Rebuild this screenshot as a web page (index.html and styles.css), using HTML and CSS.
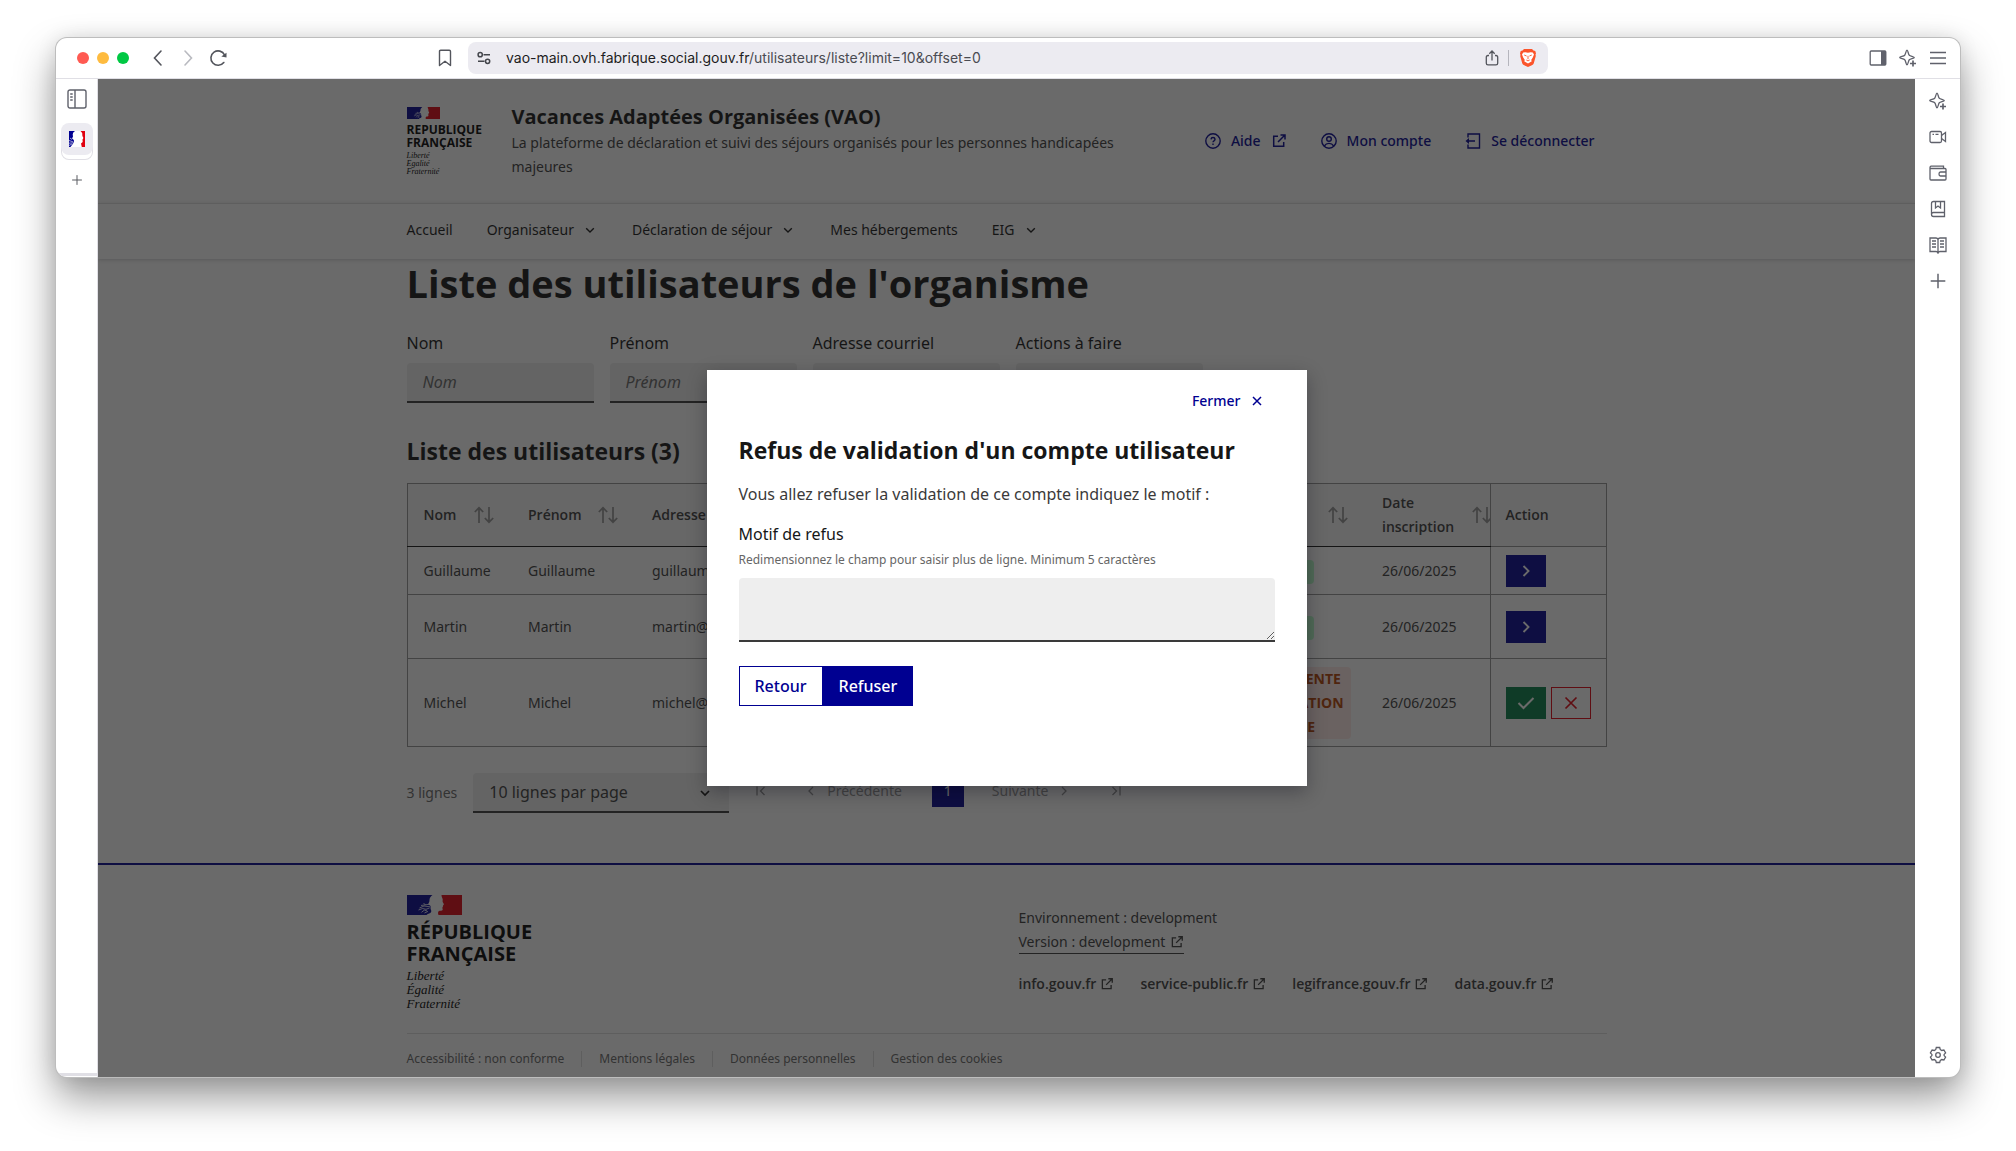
FILE: index.html
```html
<!DOCTYPE html>
<html lang="fr">
<head>
<meta charset="utf-8">
<title>Vacances Adaptées Organisées (VAO)</title>
<link rel="stylesheet" href="styles.css">
</head>
<body>
<svg class="sprite" aria-hidden="true">
  <symbol id="chevron-down" viewBox="0 0 16 16"><path d="M4.2 6.2 8 10l3.800-3.800" fill="none" stroke="currentColor" stroke-width="1.400"/></symbol>
  <symbol id="external" viewBox="0 0 16 16"><path d="M7 3.300H2.700v10h10V9M9.500 2h4.500v4.500M13.700 2.300 7 9" fill="none" stroke="currentColor" stroke-width="1.500"/></symbol>
  <symbol id="sort" viewBox="0 0 20 18"><path d="M5 17V2M.8 6 5 1.800 9.200 6M15 1v15M10.800 12l4.200 4.200 4.200-4.200" fill="none" stroke="currentColor" stroke-width="1.700"/></symbol>
  <symbol id="angle" viewBox="0 0 16 16"><path d="m5.500 3 5 5-5 5" fill="none" stroke="currentColor" stroke-width="1.900"/></symbol>
  <symbol id="plus" viewBox="0 0 16 16"><path d="M8 1.500v13M1.500 8h13" fill="none" stroke="currentColor" stroke-width="1.300"/></symbol>
  <symbol id="cross" viewBox="0 0 16 16"><path d="m2.500 2.500 11 11M13.500 2.500l-11 11" fill="none" stroke="currentColor" stroke-width="1.700"/></symbol>
  <symbol id="sparkle" viewBox="0 0 18 18"><path d="M8 1.200c1 0 1.200 4 2.300 5s5 1.300 5 2.300-4 1.200-5 2.300-1.300 5-2.300 5-1.200-4-2.300-5-5-1.300-5-2.300 4-1.200 5-2.300 1.300-5 2.300-5z" fill="none" stroke="currentColor" stroke-width="1.300"/><path d="M14 11.500v6M11 14.500h6" stroke="currentColor" stroke-width="1.700"/></symbol>
  <symbol id="flag" viewBox="0 0 55 20">
    <path d="M0 0h25.500c-1 .6-1.500 1.400-2.300 2.400-.9 1.300-.6 2.600-.8 3.900-.2 1.400-1.400 2.200-.9 3.200.6.900 1.600.7 2 1.600.3 1.200-.2 2 .2 3.200.4 1.100 1 1.700.3 2.900-.8 1.300-2.600 1-4.500 2.800H0z" fill="#000091"/>
    <path d="M34.500 0H55v20H31.500c-.7-1.500-.6-3.200.4-3.900 1.200-.7 3.200.1 3.700-1 .4-1-.3-1.500-.2-2.400.1-.8.700-1 .6-1.700-.1-.8.8-1 .9-1.700 0-.8-1.200-1.700-1.300-2.900-.1-1 .3-1.500 0-2.500-.3-1.100-1.100-1.900-1.100-3.900z" fill="#e1000f"/>
    <path d="M14 10.500l8-1.200M12.500 13l4.500-2 6 .8M11.500 15l4-1.500 3.500.8 3.500-1.300M14.500 17.300l2.800-2.200 2.700.8M17.500 18l3.500-1.600M16.500 8.500l2 1" fill="none" stroke="#fff" stroke-width=".8"/>
  </symbol>
</svg>

<div class="window">
  <div class="toolbar">
    <div class="toolbar-start">
      <div class="lights"><span class="light red"></span><span class="light amber"></span><span class="light green"></span></div>
      <div class="history">
        <button class="icon-btn" aria-label="Page précédente"><svg width="18" height="18" viewBox="0 0 18 18"><path d="m12 2-6.500 7 6.500 7" fill="none" stroke="#53555c" stroke-width="1.600" stroke-linecap="round"/></svg></button>
        <button class="icon-btn" aria-label="Page suivante"><svg width="18" height="18" viewBox="0 0 18 18"><path d="m6 2 6.500 7L6 16" fill="none" stroke="#b9bac0" stroke-width="1.600" stroke-linecap="round"/></svg></button>
        <button class="icon-btn" aria-label="Recharger"><svg width="18" height="18" viewBox="0 0 18 18"><path d="M14.800 13.500A7.200 7.200 0 1 1 15.600 6" fill="none" stroke="#53555c" stroke-width="1.600" stroke-linecap="round"/><path d="M12.300 7.500 17.500 8.500V3.800z" fill="#53555c"/></svg></button>
      </div>
      <button class="icon-btn" aria-label="Favori"><svg width="18" height="18" viewBox="0 0 18 18"><path d="M3.500 2.500q0-1.200 1.200-1.200h8.600q1.200 0 1.200 1.200v14L9 12.300 3.500 16.500z" fill="none" stroke="#53555c" stroke-width="1.400" stroke-linejoin="round"/></svg></button>
    </div>
    <div class="address">
      <svg width="14" height="14" viewBox="0 0 14 14" fill="none" stroke="#44464c" stroke-width="1.500"><circle cx="3.200" cy="3.700" r="2.100"/><path d="M6.500 3.700h6.500M1 10.300h6.500"/><circle cx="10.600" cy="10.300" r="2.100"/></svg>
      <span class="url"><span class="host">vao-main.ovh.fabrique.social.gouv.fr</span>/utilisateurs/liste?limit=10&amp;offset=0</span>
      <svg width="16" height="16" viewBox="0 0 16 16" fill="none" stroke="#53555c" stroke-width="1.300"><path d="M5 5.500H4q-1.700 0-1.700 1.700v6q0 1.700 1.700 1.700h8q1.700 0 1.700-1.700v-6q0-1.700-1.700-1.700h-1M8 10.500V1.200M5.300 3.700 8 1l2.700 2.700"/></svg>
      <span class="address-rule"></span>
      <svg width="16" height="18" viewBox="0 0 16 18"><path d="M4 0h8l1.500 1.600 1.800.4.700 2.500-.5 1 .3 1.500-2 7.200q-.4 1.200-1.400 1.800L8 18l-4.400-2q-1-.6-1.400-1.800l-2-7.200.3-1L0 4.500.7 2l1.800-.4z" fill="#fb542b"/><path d="M3.200 3.600 5.300 3.200 8 3.800l2.700-.6 2.100.4 1.200 2-1.200 3-1.600 2.300.6 1.300L8 14.600l-3.800-2.400.6-1.300L3.200 8.600 2 5.600z" fill="#fff"/><path d="M4.200 6 6.600 7M11.800 6 9.400 7M8 6.800v3.400M6.300 11 8 11.900 9.700 11" stroke="#fb542b" stroke-width=".9" fill="none"/></svg>
    </div>
    <div class="toolbar-end">
      <svg width="18" height="18" viewBox="0 0 18 18"><rect x="1.200" y="2" width="15.600" height="14" rx="1" fill="none" stroke="#5f616b" stroke-width="1.300"/><path d="M12 2h5v14h-5z" fill="#5f616b"/></svg>
      <svg width="18" height="18"><use href="#sparkle"/></svg>
      <svg width="18" height="18" viewBox="0 0 18 18"><path d="M1 3.500h16M1 9h16M1 14.500h16" stroke="#5f616b" stroke-width="1.300"/></svg>
    </div>
  </div>

  <div class="workspace">
    <aside class="rail rail-left">
      <svg width="20" height="20" viewBox="0 0 20 20" fill="none" stroke="#5f616b" stroke-width="1.400"><rect x="1" y="1" width="18" height="18" rx="2"/><path d="M8 1v18"/><path d="M3.200 5h2.500M3.200 8h2.500M3.200 11h2.500"/></svg>
      <div class="tab-active"><svg width="16" height="16" viewBox="0 0 16 16"><path d="M0 0h16v16H0z" fill="#fff"/><path d="M0 0h6L4.300 1.500l-.6 2 .3 2-.9 2 1.700 1.600.3 2L3 14l-1.500 2H0z" fill="#000091"/><path d="M16 0h-4.500l1.700 2 .2 3 1 2-.9 1.500.2 2.500-1.700 1.500.8 3.500H16z" fill="#e1000f"/><path d="m0 9.500 4.500 1.500M0 12.200l4.500-.4M0 14.500l3-1.500M1 7l2 1.500" stroke="#fff" stroke-width=".6"/></svg></div>
      <svg class="faint" width="12" height="12"><use href="#plus"/></svg>
      <span class="rail-foot"></span>
    </aside>

    <div class="viewport">
      <div class="page">
        <header class="site-header">
          <div class="container brand-row">
            <div class="logo logo-small">
              <svg class="flag" viewBox="0 0 55 20"><use href="#flag"/></svg>
              <p class="logo-name">REPUBLIQUE<br>FRANÇAISE</p>
              <p class="logo-motto">Liberté<br>Egalité<br>Fraternité</p>
            </div>
            <div class="service">
              <p class="service-title">Vacances Adaptées Organisées (VAO)</p>
              <p class="service-tagline">La plateforme de déclaration et suivi des séjours organisés pour les personnes handicapées majeures</p>
            </div>
            <ul class="quick-links">
              <li><a href="#aide"><svg width="16" height="16" viewBox="0 0 16 16" fill="none" stroke="currentColor" stroke-width="1.400"><circle cx="8" cy="8" r="7.200"/><path d="M6 6.300q.2-1.800 2-1.800t2 1.700q0 1-1 1.600T8 9.300M8 10.500V12"/></svg>Aide<svg width="16" height="16"><use href="#external"/></svg></a></li>
              <li><a href="#compte"><svg width="16" height="16" viewBox="0 0 16 16" fill="none" stroke="currentColor" stroke-width="1.400"><circle cx="8" cy="8" r="7.200"/><circle cx="8" cy="6" r="2.300"/><path d="M3.300 13q1.700-2.600 4.700-2.600t4.700 2.600"/></svg>Mon compte</a></li>
              <li><a href="#sortie"><svg width="16" height="16" viewBox="0 0 16 16" fill="none" stroke="currentColor" stroke-width="1.400"><path d="M3 4.500V1h11.500v14H3v-3.500M10 8H2"/><path d="M4 5 .5 8 4 11z" fill="currentColor" stroke="none"/></svg>Se déconnecter</a></li>
            </ul>
          </div>
          <nav class="main-nav">
            <ul class="container nav-list">
              <li><a href="#accueil">Accueil</a></li>
              <li><button>Organisateur<svg width="16" height="16"><use href="#chevron-down"/></svg></button></li>
              <li><button>Déclaration de séjour<svg width="16" height="16"><use href="#chevron-down"/></svg></button></li>
              <li><a href="#hebergements">Mes hébergements</a></li>
              <li><button>EIG<svg width="16" height="16"><use href="#chevron-down"/></svg></button></li>
            </ul>
          </nav>
        </header>

        <main class="container">
          <h1>Liste des utilisateurs de l'organisme</h1>
          <form class="filters">
            <div class="field"><label for="nom">Nom</label><input id="nom" type="text" placeholder="Nom"></div>
            <div class="field"><label for="prenom">Prénom</label><input id="prenom" type="text" placeholder="Prénom"></div>
            <div class="field"><label for="courriel">Adresse courriel</label><input id="courriel" type="text"></div>
            <div class="field"><label for="actions">Actions à faire</label><input id="actions" type="text"></div>
          </form>
          <h2>Liste des utilisateurs (3)</h2>
          <table class="users">
            <colgroup><col class="c-nom"><col class="c-prenom"><col class="c-mail"><col class="c-statut"><col class="c-date"><col class="c-action"></colgroup>
            <thead>
              <tr>
                <th scope="col"><div class="th">Nom<svg width="20" height="18"><use href="#sort"/></svg></div></th>
                <th scope="col"><div class="th">Prénom<svg width="20" height="18"><use href="#sort"/></svg></div></th>
                <th scope="col">Adresse courriel</th>
                <th scope="col"><div class="th">Statut<svg width="20" height="18"><use href="#sort"/></svg></div></th>
                <th scope="col"><div class="th th-date">Date inscription<svg width="20" height="18"><use href="#sort"/></svg></div></th>
                <th scope="col" class="action">Action</th>
              </tr>
            </thead>
            <tbody>
              <tr>
                <td>Guillaume</td><td>Guillaume</td><td>guillaume@vao.fr</td><td><span class="badge ok">VALIDÉ</span></td><td>26/06/2025</td>
                <td class="action"><div class="actions"><button class="act go" aria-label="Voir"><svg width="16" height="16"><use href="#angle"/></svg></button></div></td>
              </tr>
              <tr class="tall">
                <td>Martin</td><td>Martin</td><td>martin@vao.fr</td><td><span class="badge ok">VALIDÉ</span></td><td>26/06/2025</td>
                <td class="action"><div class="actions"><button class="act go" aria-label="Voir"><svg width="16" height="16"><use href="#angle"/></svg></button></div></td>
              </tr>
              <tr>
                <td>Michel</td><td>Michel</td><td>michel@vao.fr</td><td><span class="badge wait">EN ATTENTE<br>VALIDATION<br>COMPTE</span></td><td>26/06/2025</td>
                <td class="action"><div class="actions"><button class="act accept" aria-label="Valider"><svg width="18" height="16" viewBox="0 0 18 16"><path d="m1.500 8 5 5L16.500 3" fill="none" stroke="currentColor" stroke-width="2"/></svg></button><button class="act refuse" aria-label="Refuser"><svg width="16" height="16"><use href="#cross"/></svg></button></div></td>
              </tr>
            </tbody>
          </table>
          <div class="table-foot">
            <label for="lignes">3 lignes</label>
            <div class="select"><select id="lignes"><option>10 lignes par page</option></select><svg width="16" height="16" viewBox="0 0 16 16"><path d="M4 6l4 4 4-4" fill="none" stroke="currentColor" stroke-width="1.700"/></svg></div>
            <nav class="pagination" aria-label="Pagination">
              <svg width="16" height="16" viewBox="0 0 16 16" fill="none" stroke="currentColor" stroke-width="1.300"><path d="M4 3.500v9M11.500 4l-4 4 4 4"/></svg>
              <span class="prev"><svg width="16" height="16" viewBox="0 0 16 16" fill="none" stroke="currentColor" stroke-width="1.300"><path d="M10 4 6 8l4 4"/></svg>Précédente</span>
              <a class="current" href="#page-1">1</a>
              <span class="next">Suivante<svg width="16" height="16" viewBox="0 0 16 16" fill="none" stroke="currentColor" stroke-width="1.300"><path d="m6 4 4 4-4 4"/></svg></span>
              <svg width="16" height="16" viewBox="0 0 16 16" fill="none" stroke="currentColor" stroke-width="1.300"><path d="M12 3.500v9M4.500 4l4 4-4 4"/></svg>
            </nav>
          </div>
        </main>

        <footer class="site-footer">
          <div class="container">
            <div class="footer-body">
              <div class="logo logo-large">
                <svg class="flag" viewBox="0 0 55 20"><use href="#flag"/></svg>
                <p class="logo-name">RÉPUBLIQUE<br>FRANÇAISE</p>
                <p class="logo-motto">Liberté<br>Égalité<br>Fraternité</p>
              </div>
              <div class="footer-content">
                <p>Environnement : development</p>
                <p><a class="version" href="#version">Version : development<svg width="14" height="14"><use href="#external"/></svg></a></p>
                <ul class="gov-links">
                  <li><a href="#info">info.gouv.fr<svg width="14" height="14"><use href="#external"/></svg></a></li>
                  <li><a href="#service">service-public.fr<svg width="14" height="14"><use href="#external"/></svg></a></li>
                  <li><a href="#legifrance">legifrance.gouv.fr<svg width="14" height="14"><use href="#external"/></svg></a></li>
                  <li><a href="#data">data.gouv.fr<svg width="14" height="14"><use href="#external"/></svg></a></li>
                </ul>
              </div>
            </div>
            <ul class="legal">
              <li><a href="#a11y">Accessibilité : non conforme</a></li>
              <li><a href="#mentions">Mentions légales</a></li>
              <li><a href="#donnees">Données personnelles</a></li>
              <li><a href="#cookies">Gestion des cookies</a></li>
            </ul>
          </div>
        </footer>
      </div>

      <div class="scrim">
        <div class="modal" role="dialog" aria-labelledby="modal-title">
          <div class="modal-head"><button class="close">Fermer<svg width="16" height="16" viewBox="0 0 16 16"><path d="m4 4 8 8M12 4l-8 8" fill="none" stroke="currentColor" stroke-width="1.500"/></svg></button></div>
          <h2 id="modal-title">Refus de validation d'un compte utilisateur</h2>
          <p class="modal-text">Vous allez refuser la validation de ce compte indiquez le motif :</p>
          <label for="motif">Motif de refus</label>
          <p class="hint" id="motif-hint">Redimensionnez le champ pour saisir plus de ligne. Minimum 5 caractères</p>
          <textarea id="motif" aria-describedby="motif-hint"></textarea>
          <div class="modal-actions"><button class="btn secondary">Retour</button><button class="btn primary">Refuser</button></div>
        </div>
      </div>
    </div>

    <aside class="rail rail-right">
      <svg width="18" height="18"><use href="#sparkle"/></svg>
      <svg width="18" height="18" viewBox="0 0 18 18" fill="none" stroke="currentColor" stroke-width="1.300"><rect x="1" y="3.500" width="11.500" height="11" rx="1.500"/><path d="m12.500 7.500 4-3v9l-4-3M3.500 6.300H5M6.500 6.300h3"/></svg>
      <svg width="18" height="18" viewBox="0 0 18 18" fill="none" stroke="currentColor" stroke-width="1.300"><path d="M1 3.500V15q0 1 1 1h14q1 0 1-1V5.500q0-1-1-1H2q-1 0-1-1t1-1.300h12.500v2.300M17 8h-5.500q-1.500 0-1.500 2t1.500 2H17"/></svg>
      <svg width="18" height="18" viewBox="0 0 18 18" fill="none" stroke="currentColor" stroke-width="1.300"><path d="M15.500 12.500v-11h-11q-2 0-2 2v11q0 2 2 2h11v-4h-11q-2 0-2 2M6.500 1.500V8L9 6l2.500 2V1.500"/></svg>
      <svg width="18" height="18" viewBox="0 0 18 18" fill="none" stroke="currentColor" stroke-width="1.300"><path d="M9 3.500Q8.500 2 7 2H1v13.500h6q1.500 0 2 1.500.5-1.500 2-1.500h6V2h-6q-1.500 0-2 1.500V17M3 5h4M3 8h4M3 11h4M11 5h4M11 8h4M11 11h4"/></svg>
      <svg width="18" height="18"><use href="#plus"/></svg>
      <svg class="gear" width="18" height="18" viewBox="0 0 18 18" fill="none" stroke="currentColor" stroke-width="1.300"><path d="M7.300 1.500h3.400l.6 2.100 1.500.9 2.100-.5 1.700 2.900-1.500 1.500v1.200l1.500 1.500-1.700 2.900-2.100-.5-1.500.9-.6 2.100H7.300l-.6-2.100-1.500-.9-2.100.5-1.700-2.900 1.500-1.500V8.400L1.400 6.900 3.100 4l2.100.5 1.500-.9z"/><circle cx="9" cy="9" r="2.300"/></svg>
    </aside>
  </div>
</div>
</body>
</html>
```

FILE: styles.css
```css
:root {
  --text: "Noto Sans", "Open Sans", sans-serif;
  --strong: "Open Sans", "Noto Sans", sans-serif;
  --ui: Inter, "Liberation Sans", sans-serif;
  --blue: #000091;
  --grey: #3a3a3a;
  --ink: #161616;
}
* { box-sizing: border-box; }
body {
  margin: 0;
  padding: 38px 56px 74px;
  height: 100vh;
  background: #fff;
  color: var(--grey);
  font: 14px/24px var(--text);
  overflow: hidden;
}
p, h1, h2, ul { margin: 0; padding: 0; }
h1, h2 { font-family: var(--strong); font-weight: 700; }
ul { list-style: none; }
a { color: inherit; text-decoration: none; }
button { font: inherit; color: inherit; background: none; border: 0; padding: 0; }
svg { flex: none; display: block; }
.sprite { position: absolute; width: 0; height: 0; }

/* Browser window */
.window {
  display: flex;
  flex-direction: column;
  height: 100%;
  border-radius: 11px;
  overflow: hidden;
  background: #fff;
  box-shadow: 0 0 0 1px #bdbdbd, 0 20px 40px rgba(0, 0, 0, .42), 0 0 20px rgba(0, 0, 0, .1);
}
.toolbar {
  display: flex;
  align-items: center;
  height: 41px;
  flex: none;
  border-bottom: 1px solid #e0dfe5;
  color: #5f616b;
}
.toolbar-start { display: flex; align-items: center; width: 412px; padding: 0 14px 0 21px; }
.lights { display: flex; gap: 8px; }
.light { width: 12px; height: 12px; border-radius: 50%; }
.red { background: #ff5a52; }
.amber { background: #febb3f; }
.green { background: #00c843; }
.history { display: flex; gap: 12px; margin: 0 auto 0 20px; }
.address {
  display: flex;
  align-items: center;
  flex: 0 1 1080px;
  height: 32px;
  padding: 0 12px 0 9px;
  border-radius: 8px;
  background: #ecebf1;
}
.url { flex: 1; margin-left: 15px; font: 14px/20px var(--ui); color: #4a4b52; }
.host { color: #1d1d22; }
.address-rule { width: 1px; height: 16px; margin: 0 11px 0 8px; background: #b5b5bd; }
.toolbar-end { display: flex; gap: 12px; margin-left: auto; padding-right: 13px; }
.workspace { display: flex; flex: 1; min-height: 0; }
.rail { display: flex; flex-direction: column; align-items: center; flex: none; color: #5f616b; }
.rail-left { width: 42px; padding-top: 10px; border-right: 1px solid #e0dfe5; }
.tab-active {
  display: grid;
  place-items: center;
  width: 32px;
  height: 32px;
  margin: 14px 0 19px;
  border-radius: 8px;
  background: #ecebf1;
  box-shadow: 0 5px 0 -1px #fff, 0 5px 0 0 #e0dfe5;
}
.faint { color: #55575e; }
.rail-foot { width: 100%; height: 3px; margin: auto 0 1px; background: #e0dfe5; }
.rail-right { width: 45px; gap: 18px; padding: 13px 0 13px; }
.gear { margin-top: auto; }

/* Page */
.viewport { position: relative; flex: 1; min-width: 0; overflow: hidden; background: #fff; }
.container { width: calc(100% - 48px); max-width: 1200px; margin: 0 auto; }
.brand-row { display: flex; align-items: center; height: 124px; }
.logo { color: #000; }
.logo-name { font-family: var(--strong); font-weight: 700; }
.logo-motto { font-family: "Liberation Serif", serif; font-style: italic; }
.flag { width: 55px; height: 20px; }
.logo-small { width: 105px; }
.logo-small .flag { width: 33px; height: 12px; }
.logo-small .logo-name { margin-top: 4px; font-size: 12px; line-height: 13px; }
.logo-small .logo-motto { margin-top: 3px; font-size: 8px; line-height: 8px; }
.service { flex: 1; max-width: 632px; }
.service-title { font: 700 20px/28px var(--strong); color: var(--ink); }
.quick-links { display: flex; margin-left: auto; color: var(--blue); font-weight: 500; }
.quick-links a { display: flex; align-items: center; gap: 10px; padding: 4px 12px; }
.quick-links li + li { margin-left: 10px; }
.main-nav { border-top: 1px solid #ddd; box-shadow: 0 1px 4px rgba(0, 0, 18, .2); color: var(--ink); }
.nav-list { display: flex; gap: 34px; }
.nav-list a, .nav-list button { display: flex; align-items: center; gap: 8px; padding: 14px 0 17px; }

h1 { font-size: 38px; line-height: 48px; color: var(--ink); }
.filters { display: flex; gap: 16px; margin-top: 24px; }
.field { flex: 0 1 187px; min-width: 0; }
.field label { display: block; font-size: 16px; color: var(--ink); }
.field input {
  display: block;
  width: 100%;
  height: 40px;
  margin-top: 8px;
  padding: 0 16px;
  border: 0;
  border-bottom: 2px solid var(--grey);
  border-radius: 4px 4px 0 0;
  background: #eee;
  font: 16px/24px var(--text);
}
.field input::placeholder { color: #666; font-style: italic; }
main h2 { margin: 32px 0 16px; font-size: 23px; line-height: 32px; color: var(--ink); }

.users { width: 100%; table-layout: fixed; border-collapse: collapse; border: 1px solid #929292; }
.c-nom { width: 105px; }
.c-prenom { width: 124px; }
.c-statut { width: 132px; }
.c-date { width: 124px; }
.c-action { width: 116px; }
.users th { height: 63px; padding: 0 0 0 16px; text-align: left; font-family: var(--strong); font-weight: 600; background: #f6f6f6; border-bottom: 1px solid var(--ink); }
.users td { height: 48px; padding: 8px 0 7px 16px; border-bottom: 1px solid #929292; }
.users .tall td { height: 64px; }
.users .action { padding-left: 15px; border-left: 1px solid #929292; }
.users th.action { border-bottom-color: #929292; }
.th { display: flex; align-items: center; justify-content: space-between; padding-right: 18px; overflow: hidden; }
.th svg { color: #929292; }
.th-date { padding-right: 0; }
.th-date svg { margin-right: -2px; }
.badge { display: inline-block; vertical-align: middle; padding: 0 7px; border-radius: 4px; font-family: var(--strong); font-weight: 700; }
.ok { color: #18753c; background: #b8fec9; }
.wait { color: #b34000; background: #ffe9e6; }
.actions { display: flex; gap: 5px; }
.act { display: grid; place-items: center; width: 40px; height: 32px; color: #fff; }
.go { background: var(--blue); }
.accept { background: #057d45; }
.refuse { border: 1px solid #e1000f; color: #e1000f; }

.table-foot { display: flex; align-items: center; gap: 16px; margin: 26px 0 50px; color: #666; }
.select { position: relative; width: 256px; color: var(--ink); }
.select select {
  display: block;
  width: 100%;
  height: 40px;
  padding: 0 16px;
  appearance: none;
  border: 0;
  border-bottom: 2px solid var(--grey);
  border-radius: 4px 4px 0 0;
  background: #eee;
  color: var(--grey);
  font: 16px/24px var(--text);
}
.select svg { position: absolute; right: 16px; top: 12px; }
.pagination { display: flex; align-items: center; padding: 0 0 4px 8px; color: #929292; }
.prev, .next { display: flex; align-items: center; gap: 8px; }
.prev { margin: 0 30px 0 34px; }
.next { margin: 0 36px 0 28px; }
.current { width: 32px; height: 32px; line-height: 32px; text-align: center; background: var(--blue); color: #fff; }

.site-footer { border-top: 2px solid var(--blue); }
.footer-body { display: flex; justify-content: space-between; padding: 30px 0 22px; }
.logo-large .logo-name { margin-top: 6px; font-size: 20px; line-height: 22px; }
.logo-large .logo-motto { margin-top: 4px; font-size: 13px; line-height: 14px; }
.footer-content { width: 588px; padding-top: 11px; }
.version { display: inline-flex; align-items: center; gap: 5px; line-height: 22px; border-bottom: 1px solid var(--grey); }
.gov-links { display: flex; gap: 26px; margin-top: 18px; font-family: var(--strong); font-weight: 600; }
.gov-links a { display: flex; align-items: center; gap: 4px; }
.legal { display: flex; padding-top: 17px; border-top: 1px solid #ddd; font-size: 12px; line-height: 16px; color: #666; }
.legal li + li { margin-left: 17px; padding-left: 17px; border-left: 1px solid #ddd; }

/* Dialog */
.scrim {
  position: absolute;
  inset: 0;
  display: grid;
  place-items: center;
  background: rgba(22, 22, 22, .64);
}
.modal {
  width: 600px;
  max-width: 100%;
  padding: 15px 32px 80px;
  background: #fff;
  box-shadow: 0 6px 18px rgba(0, 0, 18, .3);
}
.modal-head { display: flex; justify-content: flex-end; margin-bottom: 17px; }
.close { display: flex; align-items: center; gap: 8px; padding: 4px 10px 4px 12px; color: var(--blue); font-weight: 500; }
.modal h2 { font-size: 23px; line-height: 32px; color: var(--ink); margin-bottom: 16px; }
.modal-text { font-size: 16px; }
.modal label { display: block; margin-top: 16px; font-size: 16px; color: var(--ink); }
.hint { margin-top: 4px; font-size: 12px; line-height: 20px; color: #666; }
.modal textarea {
  display: block;
  width: 100%;
  height: 64px;
  margin-top: 8px;
  border: 0;
  border-bottom: 2px solid var(--grey);
  border-radius: 4px 4px 0 0;
  background: #eee;
  resize: vertical;
}
.modal-actions { display: flex; margin-top: 24px; }
.btn { height: 40px; padding: 0 15px; font-size: 16px; font-weight: 500; border: 1px solid var(--blue); color: var(--blue); }
.btn.primary { background: var(--blue); color: #fff; }
```
